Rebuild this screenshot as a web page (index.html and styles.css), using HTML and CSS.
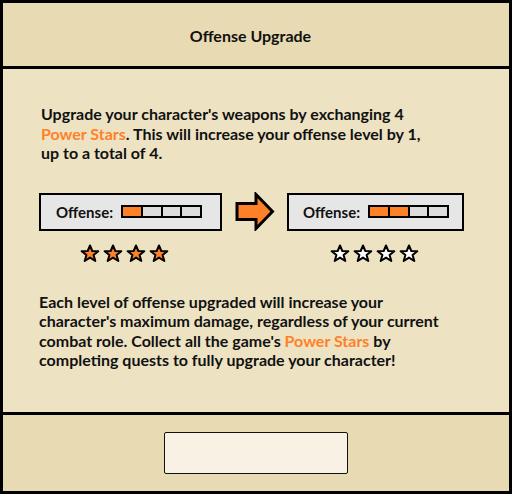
FILE: index.html
```html
<!DOCTYPE html>
<html lang="en">
<head>
    <meta charset="UTF-8">
    <meta name="viewport" content="width=device-width, initial-scale=1.0">
    <title>Offense Upgrade</title>
    <link rel="stylesheet" href="styles.css">
</head>
<body>
    <div class="panel">
        <div class="header">
            <h2>Offense Upgrade</h2>
        </div>

        <div class="content">
            <p class="intro">Upgrade your character's weapons by exchanging 4 <span class="hl">Power Stars</span>. This will increase your offense level by 1, up to a total of 4.</p>

            <div class="compare">
                <div class="level">
                    <div class="stat-box left-box">
                        <span class="stat-label">Offense:</span>
                        <div class="bar">
                            <span class="seg on"></span>
                            <span class="seg"></span>
                            <span class="seg"></span>
                            <span class="seg"></span>
                        </div>
                    </div>
                    <div class="stars left-stars">
                        <svg class="star" viewBox="0 0 20 19"><path class="filled" d="M10 1.5 L12.3 7 L18.3 7.2 L13.6 11 L15.3 17 L10 13.6 L4.7 17 L6.4 11 L1.7 7.2 L7.7 7 Z"/></svg>
                        <svg class="star" viewBox="0 0 20 19"><path class="filled" d="M10 1.5 L12.3 7 L18.3 7.2 L13.6 11 L15.3 17 L10 13.6 L4.7 17 L6.4 11 L1.7 7.2 L7.7 7 Z"/></svg>
                        <svg class="star" viewBox="0 0 20 19"><path class="filled" d="M10 1.5 L12.3 7 L18.3 7.2 L13.6 11 L15.3 17 L10 13.6 L4.7 17 L6.4 11 L1.7 7.2 L7.7 7 Z"/></svg>
                        <svg class="star" viewBox="0 0 20 19"><path class="filled" d="M10 1.5 L12.3 7 L18.3 7.2 L13.6 11 L15.3 17 L10 13.6 L4.7 17 L6.4 11 L1.7 7.2 L7.7 7 Z"/></svg>
                    </div>
                </div>

                <svg class="arrow" viewBox="0 0 40 39">
                    <polygon points="2,11.5 21,11.5 21,2.5 37.5,19.5 21,36.5 21,27.5 2,27.5"/>
                </svg>

                <div class="level">
                    <div class="stat-box right-box">
                        <span class="stat-label">Offense:</span>
                        <div class="bar">
                            <span class="seg on"></span>
                            <span class="seg on"></span>
                            <span class="seg"></span>
                            <span class="seg"></span>
                        </div>
                    </div>
                    <div class="stars right-stars">
                        <svg class="star" viewBox="0 0 20 19"><path class="empty" d="M10 1.5 L12.3 7 L18.3 7.2 L13.6 11 L15.3 17 L10 13.6 L4.7 17 L6.4 11 L1.7 7.2 L7.7 7 Z"/></svg>
                        <svg class="star" viewBox="0 0 20 19"><path class="empty" d="M10 1.5 L12.3 7 L18.3 7.2 L13.6 11 L15.3 17 L10 13.6 L4.7 17 L6.4 11 L1.7 7.2 L7.7 7 Z"/></svg>
                        <svg class="star" viewBox="0 0 20 19"><path class="empty" d="M10 1.5 L12.3 7 L18.3 7.2 L13.6 11 L15.3 17 L10 13.6 L4.7 17 L6.4 11 L1.7 7.2 L7.7 7 Z"/></svg>
                        <svg class="star" viewBox="0 0 20 19"><path class="empty" d="M10 1.5 L12.3 7 L18.3 7.2 L13.6 11 L15.3 17 L10 13.6 L4.7 17 L6.4 11 L1.7 7.2 L7.7 7 Z"/></svg>
                    </div>
                </div>
            </div>

            <p class="outro">Each level of offense upgraded will increase your character's maximum damage, regardless of your current combat role. Collect all the game's <span class="hl">Power Stars</span> by completing quests to fully upgrade your character!</p>
        </div>

        <div class="footer">
            <div class="confirm"></div>
        </div>
    </div>
</body>
</html>
```

FILE: styles.css
```css
body {
    margin: 0;
    font-family: Lato, "Open Sans", sans-serif;
    font-weight: bold;
    color: #111;
}
.panel {
    width: 512px;
    height: 494px;
    box-sizing: border-box;
    border: 3px solid #000;
    display: flex;
    flex-direction: column;
    background: #000;
    gap: 3px;
}
.header {
    height: 63px;
    flex-shrink: 0;
    background: #e8dab2;
    display: flex;
    align-items: center;
    justify-content: center;
}
.header h2 {
    margin: 0 11px 0 0;
    font-size: 16px;
    font-weight: bold;
    padding-top: 2px;
}
.content {
    flex: 1;
    background: #ede3c3;
    padding: 35px 62px 0 36px;
}
.content p {
    margin: 0;
    font-size: 16px;
    line-height: 19.5px;
}
.content .intro {
    padding-left: 2px;
    max-width: 395px;
}
.hl {
    color: #ff8127;
}
.compare {
    display: flex;
    align-items: flex-start;
    margin-top: 30px;
    gap: 12px;
}
.level {
    display: flex;
    flex-direction: column;
    align-items: center;
}
.stat-box {
    height: 38px;
    box-sizing: border-box;
    border: 2px solid #000;
    background: #e6e6e6;
    display: flex;
    align-items: center;
    gap: 8px;
    padding-left: 15px;
}
.left-box {
    width: 183px;
}
.right-box {
    width: 177px;
    padding-left: 14px;
}
.stat-label {
    font-size: 15px;
}
.bar {
    display: flex;
    width: 81px;
    height: 13px;
    box-sizing: border-box;
    border: 2px solid #000;
    background: #000;
    gap: 2px;
}
.seg {
    flex: 1;
    background: #dcdcdc;
}
.seg.on {
    background: #ff8127;
}
.arrow {
    width: 40px;
    height: 39px;
    flex-shrink: 0;
    margin: -1px 0 0 1px;
}
.arrow polygon {
    fill: #ff8127;
    stroke: #000;
    stroke-width: 3;
    stroke-linejoin: miter;
}
.stars {
    display: flex;
    gap: 3px;
    margin-top: 13px;
}
.left-stars {
    margin-right: 12px;
}
.right-stars {
    margin-right: 3px;
}
.star {
    width: 20px;
    height: 19px;
}
.star path {
    stroke: #000;
    stroke-width: 2;
    stroke-linejoin: round;
}
.star .filled {
    fill: #ff8127;
}
.star .empty {
    fill: #fff;
}
.content .outro {
    margin-top: 29px;
}
.footer {
    height: 76px;
    flex-shrink: 0;
    background: #e8dab2;
    display: flex;
    align-items: center;
    justify-content: center;
}
.confirm {
    width: 184px;
    height: 42px;
    box-sizing: border-box;
    border: 1px solid #111;
    border-radius: 2px;
    background: #f9f1e3;
}
```
